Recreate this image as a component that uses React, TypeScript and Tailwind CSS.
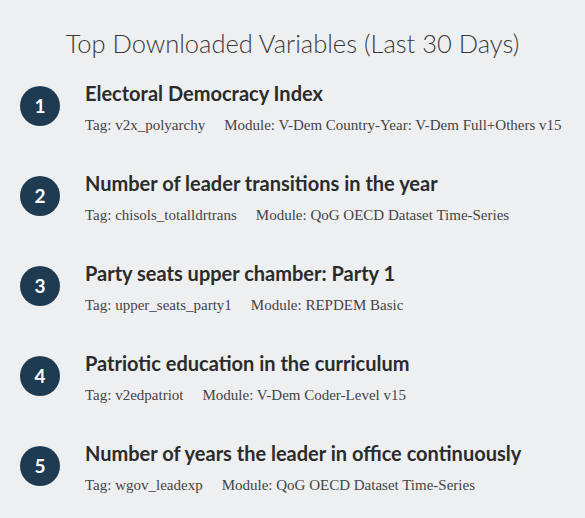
const items = [
  { title: "Electoral Democracy Index", tag: "v2x_polyarchy", module: "V-Dem Country-Year: V-Dem Full+Others v15" },
  { title: "Number of leader transitions in the year", tag: "chisols_totalldrtrans", module: "QoG OECD Dataset Time-Series" },
  { title: "Party seats upper chamber: Party 1", tag: "upper_seats_party1", module: "REPDEM Basic" },
  { title: "Patriotic education in the curriculum", tag: "v2edpatriot", module: "V-Dem Coder-Level v15" },
  { title: "Number of years the leader in office continuously", tag: "wgov_leadexp", module: "QoG OECD Dataset Time-Series" },
];

export default function App() {
  return (
    <div className="w-[585px] h-[518px] bg-[#eeeff1] text-[#333] overflow-hidden">
      <h2 className="pt-[27px] text-center text-[25.5px] leading-[32px] font-light font-['Lato',sans-serif] text-[#3a3a3a]">
        Top Downloaded Variables (Last 30 Days)
      </h2>
      <ul className="mt-[12px] flex flex-col">
        {items.map((it, i) => (
          <li key={i} className="h-[90px] flex items-start pl-[20px]">
            <div className="mt-[15px] w-[40px] h-[40px] rounded-full bg-[#1e3b52] text-white flex items-center justify-center font-['Lato',sans-serif] font-bold text-[19px]">
              {i + 1}
            </div>
            <div className="ml-[25px] pt-[8px]">
              <div className="font-['Lato',sans-serif] font-bold text-[20px] leading-[28px] text-[#2b2b2b]">
                {it.title}
              </div>
              <div className="mt-[8px] flex gap-[19px] font-['Liberation_Serif',serif] text-[15px] leading-[20px] text-[#444]">
                <span>Tag: {it.tag}</span>
                <span>Module: {it.module}</span>
              </div>
            </div>
          </li>
        ))}
      </ul>
    </div>
  );
}
